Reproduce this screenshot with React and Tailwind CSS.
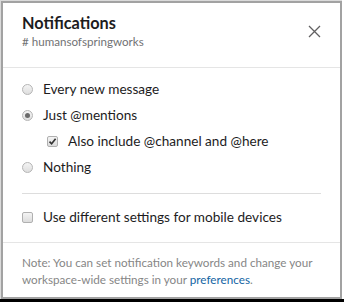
import React from "react";

const font = { fontFamily: "Lato, 'Noto Sans', sans-serif" };

function Radio({ checked }) {
  return (
    <span className="flex h-[11px] w-[11px] items-center justify-center rounded-full border border-[#b5b5b5] bg-gradient-to-b from-[#f4f4f4] to-[#dedede]">
      {checked && <span className="h-[5px] w-[5px] rounded-full bg-[#6a6a6a]" />}
    </span>
  );
}

function Check({ checked }) {
  return (
    <span className="flex h-[11px] w-[11px] items-center justify-center rounded-[2px] border border-[#b0b0b0] bg-gradient-to-b from-[#f4f4f4] to-[#dcdcdc]">
      {checked && (
        <svg width="9" height="9" viewBox="0 0 9 9">
          <path d="M1.5 4.6 L3.6 6.8 L7.6 1.8" fill="none" stroke="#333" strokeWidth="1.6" />
        </svg>
      )}
    </span>
  );
}

function Row({ control, label, indent }) {
  return (
    <div className={`flex h-[26px] items-center ${indent ? "pl-[25px]" : ""}`}>
      <div className="flex w-[21px] shrink-0 items-center">{control}</div>
      <span className="text-[13.6px] text-[#1d1c1d]">{label}</span>
    </div>
  );
}

export default function App() {
  return (
    <div className="flex h-[302px] w-[344px] flex-col bg-black" style={font}>
      <div className="flex h-[299px] w-[344px] bg-white">
        <div className="h-[299px] w-[342px] border-l border-t border-[#dadada]">
          <div className="flex h-[298px] w-[341px] flex-col border-2 border-[#a2a2a2] bg-white">
            <div className="relative px-[19px] pt-[9px] pb-[17px]">
              <div className="text-[16.3px] font-bold leading-[22px] text-[#1d1c1d]">Notifications</div>
              <div className="text-[11.6px] leading-[16px] text-[#717274]"># humansofspringworks</div>
              <button className="absolute right-[19px] top-[21px] flex h-[14px] w-[14px] items-center justify-center">
                <svg width="13" height="13" viewBox="0 0 13 13">
                  <path d="M1 1 L12 12 M12 1 L1 12" stroke="#616061" strokeWidth="1.3" />
                </svg>
              </button>
            </div>
            <div className="h-px bg-[#e5e5e5]" />
            <div className="px-[19px] pt-[8px]">
              <Row control={<Radio />} label="Every new message" />
              <Row control={<Radio checked />} label="Just @mentions" />
              <Row control={<Check checked />} label="Also include @channel and @here" indent />
              <Row control={<Radio />} label="Nothing" />
              <div className="mt-[13px] h-px bg-[#dddddd]" />
              <div className="mt-[10px]">
                <Row control={<Check />} label="Use different settings for mobile devices" />
              </div>
            </div>
            <div className="mt-[12px] h-px bg-[#e5e5e5]" />
            <div className="px-[19px] pt-[11px] text-[11.7px] leading-[17px] text-[#868686]">
              Note: You can set notification keywords and change your workspace-wide settings in your{" "}
              <span className="text-[#1264a3]">preferences</span>.
            </div>
          </div>
        </div>
      </div>
    </div>
  );
}
